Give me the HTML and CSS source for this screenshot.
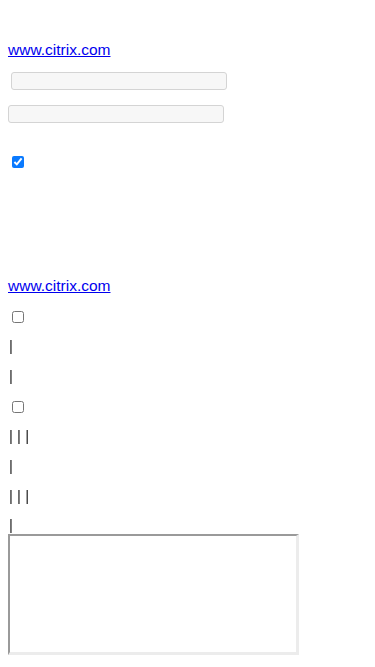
FILE: index.html
```
<!DOCTYPE html>
<html lang="en">
<head>
  <meta charset="UTF-8" />
  <meta name="viewport" content="width=device-width, initial-scale=1.0" />
  <title>Citrix</title>
  <link rel="stylesheet" href="styles.css">
</head>
<body>
  <div class="page">
    <a class="link link-top" href="#">www.citrix.com</a>
    <input class="field field-a" type="text">
    <input class="field field-b" type="text">
    <input class="check check-top" type="checkbox" checked>

    <a class="link link-bottom" href="#">www.citrix.com</a>
    <div class="row"><input class="check" type="checkbox"></div>
    <div class="row bars">|</div>
    <div class="row bars">|</div>
    <div class="row"><input class="check" type="checkbox"></div>
    <div class="row bars">| | |</div>
    <div class="row bars">|</div>
    <div class="row bars">| | |</div>
    <div class="row bars last">|</div>
    <div class="frame"></div>
  </div>
</body>
</html>
```

FILE: styles.css
```
body {
  margin: 0;
  padding: 0 8px;
  background: #fff;
  font-family: "Liberation Sans", Arial, sans-serif;
  font-size: 15px;
  color: #333;
}
.page {
  display: flex;
  flex-direction: column;
  align-items: flex-start;
  padding-top: 41px;
}
.link {
  color: #0000ee;
  text-decoration: underline;
  font-size: 15.5px;
  line-height: 17px;
}
.link-bottom {
  margin-top: 109px;
}
.field {
  box-sizing: border-box;
  height: 18px;
  width: 216px;
  margin: 0;
  padding: 0;
  border: 1px solid #d4d4d4;
  border-radius: 3px;
  background: #f7f7f7;
}
.field-a {
  margin-top: 14px;
  margin-left: 3px;
}
.field-b {
  margin-top: 15px;
}
.check {
  width: 12px;
  height: 12px;
  margin: 0 0 0 4px;
  accent-color: #0a7aff;
}
.check-top {
  margin-top: 33px;
}
.row {
  display: flex;
  align-items: center;
  height: 30px;
}
.link-bottom + .row {
  margin-top: 8px;
}
.bars {
  box-sizing: border-box;
  line-height: 17px;
  padding: 0 0 4px 1px;
  color: #222;
  transform: translateZ(0);
}
.last {
  height: 22px;
  align-items: flex-start;
  padding-top: 4px;
}
.frame {
  box-sizing: border-box;
  width: 291px;
  height: 121px;
  border-style: solid;
  border-width: 2px 3px 3px 2px;
  border-color: #9a9a9a #ececec #ececec #9a9a9a;
}
```
